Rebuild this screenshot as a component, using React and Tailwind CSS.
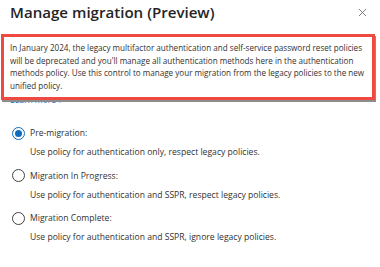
export default function App() {
  const options = [
    { label: 'Pre-migration:', desc: 'Use policy for authentication only, respect legacy policies.', checked: true },
    { label: 'Migration In Progress:', desc: 'Use policy for authentication and SSPR, respect legacy policies.' },
    { label: 'Migration Complete:', desc: 'Use policy for authentication and SSPR, ignore legacy policies.' },
  ];

  return (
    <div className="w-[380px] h-[267px] bg-white overflow-hidden font-['Open_Sans',sans-serif] text-[#323130]">
      <div className="flex items-center justify-between h-[24px] pl-[10px] pr-[13px]">
        <h1 className="text-[15.1px] leading-[24px] font-semibold text-[#242424]">
          Manage migration (Preview)
        </h1>
        <svg width="9" height="9" viewBox="0 0 10 10" className="text-[#707070]">
          <path d="M1 1L9 9M9 1L1 9" stroke="currentColor" strokeWidth="1" />
        </svg>
      </div>

      <div className="relative z-10 mt-[10px] ml-[1px] w-[374px] h-[66px] bg-white border-[3px] border-[#ef4a42] shadow-[1px_2px_0_#8c8c8c] px-[6px] pt-[5px]">
        <p className="text-[8.1px] leading-[12.7px] whitespace-nowrap">
          In January 2024, the legacy multifactor authentication and self-service password reset policies
          <br />
          will be deprecated and you'll manage all authentication methods here in the authentication
          <br />
          methods policy. Use this control to manage your migration from the legacy policies to the new
          <br />
          unified policy.
        </p>
      </div>
      <div className="-mt-[6px] pl-[10px] text-[8.5px] leading-[12px] text-[#0f6cbd]">Learn more ↗</div>

      <div className="mt-[19px] flex flex-col gap-[9.5px]">
        {options.map((o) => (
          <div key={o.label}>
            <div className="flex items-center h-[16px] pl-[12px]">
              {o.checked ? (
                <span className="flex items-center justify-center w-[13px] h-[13px] rounded-full border border-[#0f6cbd]">
                  <span className="w-[7px] h-[7px] rounded-full bg-[#0f6cbd]" />
                </span>
              ) : (
                <span className="w-[13px] h-[13px] rounded-full border border-[#424242]" />
              )}
              <span className="ml-[5px] text-[8.6px] leading-[16px]">{o.label}</span>
            </div>
            <div className="mt-[5px] pl-[30px] text-[8.6px] leading-[12px]">{o.desc}</div>
          </div>
        ))}
      </div>
    </div>
  );
}
